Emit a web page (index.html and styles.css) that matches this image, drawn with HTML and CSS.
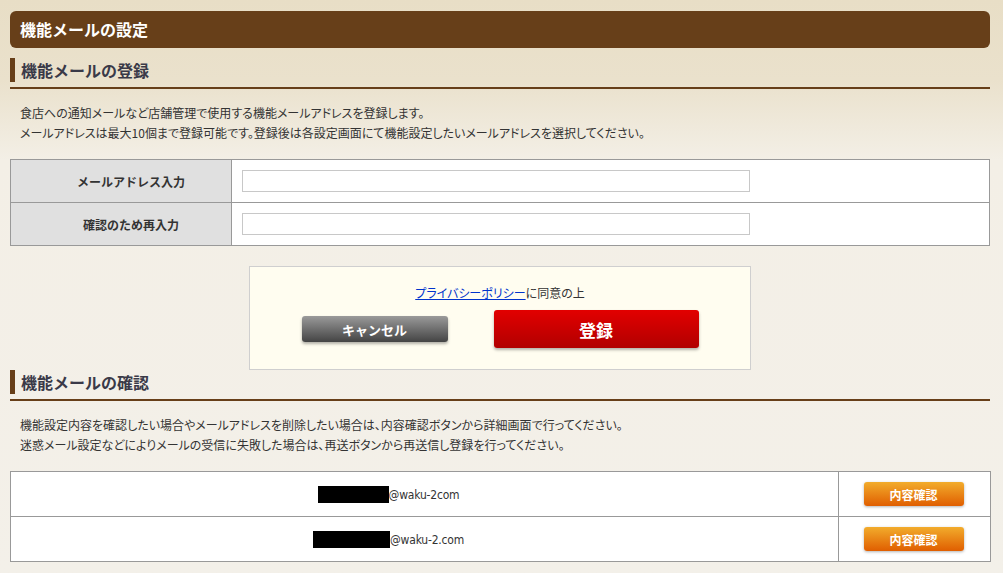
FILE: index.html
```html
<!DOCTYPE html>
<html lang="ja">
<head>
<meta charset="utf-8">
<title>機能メールの設定</title>
<link rel="stylesheet" href="styles.css">
</head>
<body>
<div class="page">
  <h1 class="title">機能メールの設定</h1>

  <h2 class="section section-first"><span class="section-label">機能メールの登録</span></h2>
  <p class="desc">食店への通知メールなど店舗管理で使用する機能メールアドレスを登録します。<br>メールアドレスは最大10個まで登録可能です。登録後は各設定画面にて機能設定したいメールアドレスを選択してください。</p>

  <table class="form-table">
    <tr>
      <th>メールアドレス入力</th>
      <td><input class="text-input" type="text"></td>
    </tr>
    <tr>
      <th>確認のため再入力</th>
      <td><input class="text-input" type="text"></td>
    </tr>
  </table>

  <div class="submit-box">
    <p class="agree"><a href="#" class="policy">プライバシーポリシー</a>に同意の上</p>
    <div class="buttons">
      <button class="btn-cancel" type="button">キャンセル</button>
      <button class="btn-register" type="button">登録</button>
    </div>
  </div>

  <h2 class="section section-second"><span class="section-label">機能メールの確認</span></h2>
  <p class="desc">機能設定内容を確認したい場合やメールアドレスを削除したい場合は、内容確認ボタンから詳細画面で行ってください。<br>迷惑メール設定などによりメールの受信に失敗した場合は、再送ボタンから再送信し登録を行ってください。</p>

  <table class="list-table">
    <tr>
      <td class="mail-cell"><span class="mask mask-1"></span>@waku-2com</td>
      <td class="action-cell"><button class="btn-check" type="button">内容確認</button></td>
    </tr>
    <tr>
      <td class="mail-cell"><span class="mask mask-2"></span>@waku-2.com</td>
      <td class="action-cell"><button class="btn-check" type="button">内容確認</button></td>
    </tr>
  </table>
</div>
</body>
</html>
```

FILE: styles.css
```css
html, body {
  margin: 0;
  padding: 0;
}

body {
  font-family: "Noto Sans CJK JP", "DejaVu Sans", sans-serif;
  font-size: 12px;
  color: #333;
  background: linear-gradient(to bottom, #e8dec6 0px, #eae1cc 80px, #f3efe6 160px, #f3f0e9 100%) no-repeat;
  background-color: #f3f0e9;
  min-height: 573px;
}

.page {
  width: 980px;
  padding: 11px 10px 20px;
}

.title {
  margin: 0;
  height: 37px;
  line-height: 36px;
  padding: 0 10px;
  background: #673f19;
  border-radius: 6px;
  color: #fff;
  font-size: 16px;
  font-weight: bold;
}

.section {
  margin: 0;
  padding-bottom: 5px;
  border-bottom: 2px solid #673f19;
  font-size: 16px;
  font-weight: bold;
  color: #3a3a48;
}

.section-first {
  margin-top: 10px;
}

.section-second {
  margin-top: 0;
}

.section-label {
  display: block;
  height: 24px;
  line-height: 24px;
  border-left: 5px solid #673f19;
  padding-left: 6px;
}

.desc {
  margin: 14px 0 0;
  padding-left: 10px;
  line-height: 20px;
  font-size: 12px;
  color: #333;
  font-feature-settings: "palt";
}

.form-table {
  margin-top: 16px;
  width: 100%;
  border-collapse: collapse;
  background: #fff;
}

.form-table th,
.form-table td {
  border: 1px solid #999;
  height: 42px;
  padding: 0;
}

.form-table th {
  width: 200px;
  padding-left: 20px;
  background: #e0e0e0;
  font-weight: bold;
  font-size: 12px;
  color: #333;
  text-align: center;
}

.form-table td {
  padding-left: 10px;
}

.text-input {
  display: block;
  width: 508px;
  height: 22px;
  box-sizing: border-box;
  border: 1px solid #c8c8c8;
  background: #fff;
  padding: 0 4px;
  margin: 0;
}

.submit-box {
  width: 500px;
  height: 102px;
  margin: 20px auto 0;
  background: #fffdf0;
  border: 1px solid #cfcfcf;
  display: flex;
  flex-direction: column;
  align-items: center;
}

.agree {
  margin: 17px 0 0;
  line-height: 18px;
  font-size: 12px;
  color: #333;
  font-feature-settings: "palt";
}

.policy {
  color: #0033cc;
  text-decoration: underline;
}

.buttons {
  margin-top: 8px;
  display: flex;
  align-items: center;
  gap: 46px;
}

.btn-cancel {
  width: 146px;
  height: 26px;
  border: none;
  border-radius: 3px;
  background: linear-gradient(to bottom, #9a9a9a, #444);
  box-shadow: 0 2px 3px rgba(0, 0, 0, 0.3);
  color: #fff;
  font-family: "Noto Sans CJK JP", sans-serif;
  font-size: 13px;
  font-weight: bold;
  padding: 0;
}

.btn-register {
  width: 205px;
  height: 38px;
  border: none;
  border-radius: 3px;
  background: linear-gradient(to bottom, #e20000, #b10000);
  box-shadow: 0 2px 3px rgba(0, 0, 0, 0.3);
  color: #fff;
  font-family: "Noto Sans CJK JP", sans-serif;
  font-size: 17px;
  font-weight: bold;
  padding: 0;
}

.list-table {
  margin-top: 16px;
  width: 981px;
  border-collapse: collapse;
  background: #fff;
}

.list-table td {
  border: 1px solid #999;
  height: 44px;
  padding: 0;
}

.mail-cell {
  text-align: center;
  padding-right: 72px !important;
  font-size: 12px;
  color: #333;
  font-family: "DejaVu Sans Condensed", "DejaVu Sans", sans-serif;
  letter-spacing: -0.2px;
}

.mask {
  display: inline-block;
  height: 17px;
  background: #000;
  vertical-align: -4px;
}

.mask-1 { width: 71px; }
.mask-2 { width: 77px; }

.action-cell {
  width: 149px;
  text-align: center;
  padding-right: 2px !important;
}

.btn-check {
  width: 100px;
  height: 24px;
  border: none;
  border-radius: 3px;
  background: linear-gradient(to bottom, #f2ac2c, #e05e00);
  box-shadow: 0 1px 3px rgba(0, 0, 0, 0.3);
  color: #fff;
  font-family: "Noto Sans CJK JP", sans-serif;
  font-size: 12px;
  font-weight: bold;
  padding: 0;
  vertical-align: middle;
}
```
